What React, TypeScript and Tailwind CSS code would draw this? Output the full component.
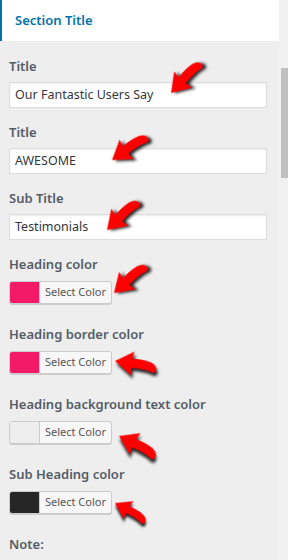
import type { ReactNode } from "react";

const FONT = "font-['Noto_Sans','Open_Sans',sans-serif]";

function Arrow({ className }: { className: string }) {
  return (
    <svg
      width="48"
      height="28"
      viewBox="0 0 48 28"
      className={`absolute origin-[2px_14px] drop-shadow-[2px_3px_1.5px_rgba(0,0,0,0.85)] ${className}`}
    >
      <path
        d="M2,14 L20,2 L19,9.5 C28,8.5 36,9 41,12 C45,14.5 45,20.5 41,20.5 C35,18.5 28,18 19,18.5 L20,26 Z"
        fill="#ff0000"
      />
    </svg>
  );
}

function Label({ children }: { children: ReactNode }) {
  return <div className="h-5 leading-5 text-[13px] font-semibold text-[#555d66]">{children}</div>;
}

function TextField({ label, value }: { label: string; value: string }) {
  return (
    <div className="mb-[14px]">
      <Label>{label}</Label>
      <div className="mt-1.5 h-[26px] w-[258px] border border-[#dddddd] bg-white px-[5px] leading-[24px] text-[12.5px] text-[#32373c] shadow-[inset_0_1px_2px_rgba(0,0,0,0.07)]">
        {value}
      </div>
    </div>
  );
}

function ColorField({ label, color }: { label: string; color: string }) {
  return (
    <div className="mb-5">
      <Label>{label}</Label>
      <div className="mt-[7px] flex h-[23px] w-[103px] overflow-hidden rounded-[3px] border border-[#cccccc] bg-[#f7f7f7] shadow-[0_1px_0_#cccccc]">
        <div className="w-[30px] border-r border-[#cccccc]" style={{ backgroundColor: color }} />
        <div className="flex flex-1 items-center justify-center text-[11px] text-[#555555]">Select Color</div>
      </div>
    </div>
  );
}

export default function App() {
  return (
    <div className={`flex h-[560px] w-[288px] overflow-hidden bg-[#f1f1f1] ${FONT}`}>
      <div className="relative w-[279px] bg-[#eeeeee]">
        {/* Section header */}
        <div className="flex h-[41px] items-center border-l-2 border-[#0073aa] bg-white pl-[13px]">
          <span className="text-[13px] font-semibold text-[#0073aa]">Section Title</span>
        </div>

        <div className="px-[9px] pt-[15px]">
          <TextField label="Title" value="Our Fantastic Users Say" />
          <TextField label="Title" value="AWESOME" />
          <TextField label="Sub Title" value="Testimonials" />
          <ColorField label="Heading color" color="#f21a67" />
          <ColorField label="Heading border color" color="#f21a67" />
          <ColorField label="Heading background text color" color="#eeeeee" />
          <ColorField label="Sub Heading color" color="#262626" />
          <Label>Note:</Label>
        </div>

        {/* red callout arrows */}
        <Arrow className="left-[169px] top-[79px] rotate-[-48deg]" />
        <Arrow className="left-[110px] top-[146px] rotate-[-36deg]" />
        <Arrow className="left-[105px] top-[216px] rotate-[-45deg]" />
        <Arrow className="left-[112px] top-[279px] rotate-[-43deg]" />
        <Arrow className="left-[113px] top-[347px] rotate-[8deg]" />
        <Arrow className="left-[117px] top-[422px] rotate-[26deg]" />
        <Arrow className="left-[113px] top-[489px] rotate-[28deg] scale-[0.85]" />
      </div>

      {/* Scrollbar */}
      <div className="w-[9px] pl-[2px]">
        <div className="mt-[68px] h-[110px] bg-[#c1c1c1]" />
      </div>
    </div>
  );
}
